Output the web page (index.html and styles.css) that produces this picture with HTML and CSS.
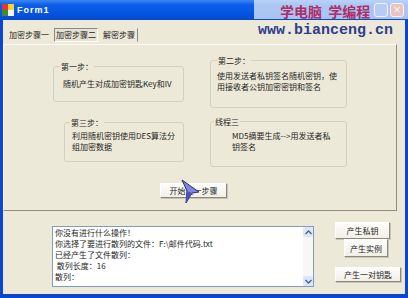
FILE: index.html
```html
<!DOCTYPE html>
<html lang="zh">
<head>
    <meta charset="UTF-8">
    <title>Form1</title>
    <link rel="stylesheet" href="styles.css">
</head>
<body>
    <div class="window">
        <div class="titlebar">
            <svg class="app-icon" width="12" height="12" viewBox="0 0 12 12">
                <rect x="0" y="0" width="6" height="6" fill="#e23a2a"/>
                <rect x="6" y="0" width="6" height="6" fill="#f7d23c"/>
                <rect x="0" y="6" width="6" height="6" fill="#3c8c3a"/>
                <rect x="6" y="6" width="6" height="6" fill="#f4f4f4"/>
            </svg>
            <span class="title">Form1</span>
            <div class="caption-buttons">
                <span class="cap-btn max"></span>
                <span class="cap-btn close">×</span>
            </div>
        </div>
        <div class="client">
            <div class="tabs">
                <span class="tab">加密步骤一</span>
                <span class="tab active">加密步骤二</span>
                <span class="tab last">解密步骤</span>
            </div>
            <div class="panel">
                <div class="row row-1">
                    <div class="group g1">
                        <span class="legend">第一步：</span>
                        <p>随机产生对成加密钥匙Key和IV</p>
                    </div>
                    <div class="group g2">
                        <span class="legend">第二步：</span>
                        <p>使用发送者私钥签名随机密钥，使<br>用接收者公钥加密密钥和签名</p>
                    </div>
                </div>
                <div class="row row-2">
                    <div class="group g3">
                        <span class="legend">第三步：</span>
                        <p>利用随机密钥使用DES算法分<br>组加密数据</p>
                    </div>
                    <div class="group g4">
                        <span class="legend">线程三</span>
                        <p>MD5摘要生成--&gt;用发送者私<br>钥签名</p>
                    </div>
                </div>
                <div class="row row-3">
                    <button class="btn start-btn">开始上一步骤</button>
                </div>
            </div>
            <div class="bottom">
                <div class="log">
                    <div class="log-text">
                        你没有进行什么操作！<br>
                        你选择了要进行散列的文件：F:\邮件代码.txt<br>
                        已经产生了文件散列：<br>
                        &nbsp;散列长度：16<br>
                        散列：
                    </div>
                    <div class="scrollbar">
                        <span class="sb-btn">
                            <svg width="7" height="5" viewBox="0 0 7 5"><path d="M0.5 4 L3.5 1 L6.5 4" fill="none" stroke="#4d6185" stroke-width="1.4"/></svg>
                        </span>
                        <span class="sb-btn">
                            <svg width="7" height="5" viewBox="0 0 7 5"><path d="M0.5 1 L3.5 4 L6.5 1" fill="none" stroke="#4d6185" stroke-width="1.4"/></svg>
                        </span>
                    </div>
                </div>
                <div class="actions">
                    <button class="btn act-1">产生私钥</button>
                    <button class="btn act-2">产生实例</button>
                    <button class="btn act-3">产生一对钥匙</button>
                </div>
            </div>
        </div>

        <div class="watermark">
            <div class="wm-cn">学电脑&nbsp;&nbsp;学编程</div>
            <div class="wm-url">www.bianceng.cn</div>
        </div>

        <svg class="cursor" width="20" height="26" viewBox="0 0 20 26">
            <polygon points="1,1 18,13 11,14 5,24 6,12" fill="#7d86e0" stroke="#2b2f70" stroke-width="1"/>
            <polygon points="6,12 11,14 5,24" fill="#4b53b8"/>
        </svg>
    </div>
</body>
</html>
```

FILE: styles.css
```css
body {
    margin: 0;
    font-family: "Noto Sans CJK SC", "Liberation Sans", sans-serif;
    font-size: 8px;
    line-height: 11px;
    color: #1e1e1e;
}
.window {
    position: relative;
    width: 408px;
    height: 298px;
    box-sizing: border-box;
    padding: 0 3px 4px;
    background: #0b45d0;
    overflow: hidden;
}
.titlebar {
    height: 20px;
    margin: 0 -3px;
    padding-left: 2px;
    display: flex;
    align-items: center;
    background: linear-gradient(#3d86f2, #0b5de6 25%, #0554e0 70%, #0a49cc);
}
.app-icon {
    margin-right: 3px;
}
.title {
    font-family: "Liberation Sans", sans-serif;
    font-weight: bold;
    font-size: 9px;
    letter-spacing: 1px;
    color: #fff;
}
.caption-buttons {
    margin-left: auto;
    margin-right: 4px;
    display: flex;
    gap: 2px;
}
.cap-btn {
    width: 14px;
    height: 14px;
    border: 1px solid #fff;
    border-radius: 3px;
    box-sizing: border-box;
    font-family: "Liberation Sans", sans-serif;
    font-size: 13px;
    line-height: 11px;
    color: #fff;
    text-align: center;
}
.cap-btn.max {
    background: #2c6ee8;
}
.cap-btn.close {
    background: #e0502c;
}
.client {
    height: 274px;
    background: #ece9d8;
}
.tabs {
    display: flex;
    gap: 3px;
    padding: 8px 0 0 4px;
}
.tab {
    padding: 0 1px;
    height: 12px;
    line-height: 12px;
    border: 1px solid transparent;
}
.tab.active {
    border-color: #8c8a80 #fff #fff #8c8a80;
    background: #e6e3d3;
}
.tab.last {
    border-right: 1px solid #8c8a80;
    padding-right: 2px;
}
.panel {
    margin-top: 2px;
    width: 394px;
    height: 167px;
    box-sizing: border-box;
    border: 1px solid;
    border-color: #fbfaf6 #8e8c82 #8e8c82 #fbfaf6;
}
.row {
    display: flex;
    align-items: flex-start;
}
.row-1 {
    margin-top: 15px;
}
.row-2 {
    margin-top: 13px;
}
.row-3 {
    margin-top: 16px;
}
.group {
    box-sizing: border-box;
    border: 1px solid #d2d0c0;
    border-radius: 3px;
}
.group p {
    margin: 0;
    white-space: nowrap;
}
.legend {
    display: table;
    margin: -6px 0 0 6px;
    padding: 0 1px;
    background: #ece9d8;
}
.g1 {
    width: 131px;
    height: 36px;
    margin: 6px 0 0 49px;
}
.g1 p {
    margin: 6px 0 0 9px;
}
.g2 {
    width: 137px;
    height: 48px;
    margin-left: 26px;
}
.g2 p {
    margin: 4px 0 0 6px;
}
.g3 {
    width: 120px;
    height: 40px;
    margin: 1px 0 0 60px;
}
.g3 .legend {
    margin-left: 5px;
}
.g3 p {
    margin: 2px 0 0 7px;
}
.g4 {
    width: 137px;
    height: 46px;
    margin-left: 26px;
}
.g4 .legend {
    margin-left: 3px;
}
.g4 p {
    margin: 3px 0 0 21px;
}
.btn {
    box-sizing: border-box;
    padding: 0;
    font-family: inherit;
    font-size: 8px;
    color: #1e1e1e;
    background: linear-gradient(#fdfdfb, #f1efe6);
    border: 1px solid;
    border-color: #fff #8a887e #8a887e #fff;
    box-shadow: 1px 1px 0 #c8c5b6;
}
.start-btn {
    width: 67px;
    height: 15px;
    margin-left: 156px;
}
.bottom {
    display: flex;
    align-items: flex-start;
    margin-top: 15px;
}
.log {
    display: flex;
    width: 262px;
    height: 61px;
    margin-left: 49px;
    box-sizing: border-box;
    border: 1px solid #7f9db9;
    background: #fff;
}
.log-text {
    flex: 1;
    padding: 0 0 0 2px;
    white-space: nowrap;
    overflow: hidden;
}
.scrollbar {
    width: 10px;
    display: flex;
    flex-direction: column;
    justify-content: space-between;
    background: #f7f7f4;
}
.sb-btn {
    height: 10px;
    display: flex;
    align-items: center;
    justify-content: center;
    background: #dbe6fb;
    border-radius: 2px;
}
.actions {
    display: flex;
    flex-direction: column;
    align-items: flex-start;
    margin: -4px 0 0 21px;
}
.act-1 {
    width: 55px;
    height: 17px;
}
.act-2 {
    width: 44px;
    height: 18px;
    margin-left: 9px;
}
.act-3 {
    width: 66px;
    height: 15px;
    margin-top: 10px;
}
.watermark {
    position: absolute;
    top: 0;
    left: 254px;
    width: 154px;
    height: 40px;
}
.watermark::before {
    content: "";
    position: absolute;
    top: 0;
    left: 0;
    right: 0;
    height: 19px;
    background: rgba(235, 240, 250, 0.72);
}
.wm-cn {
    position: relative;
    margin: 3px 0 0 26px;
    font-size: 14px;
    line-height: 16px;
    font-weight: bold;
    color: #ab2f68;
}
.wm-url {
    position: relative;
    margin: 3px 0 0 4px;
    font-family: "Liberation Mono", monospace;
    font-size: 15px;
    line-height: 17px;
    font-weight: bold;
    color: #2f3d8e;
}
.cursor {
    position: absolute;
    left: 181px;
    top: 179px;
}
```
